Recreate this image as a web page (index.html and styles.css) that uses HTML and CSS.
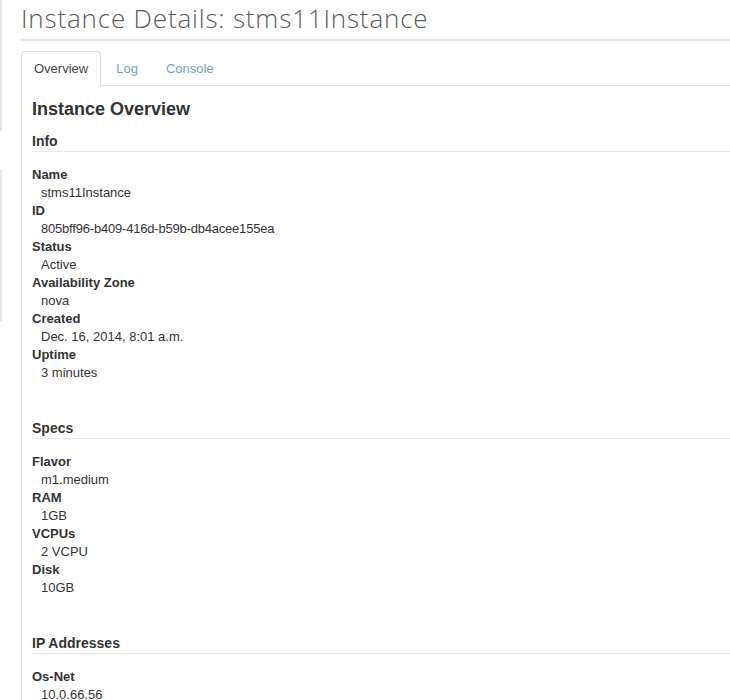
FILE: index.html
```html
<!DOCTYPE html>
<html>
<head>
<meta charset="utf-8">
<link rel="stylesheet" href="styles.css">
</head>
<body>
<div class="page">
  <div class="sidebar">
    <div class="strip strip-a"></div>
    <div class="strip strip-b"></div>
  </div>
  <div class="main">
    <h1 class="page-title">Instance Details: stms11Instance</h1>
    <ul class="tabs">
      <li class="tab active"><a>Overview</a></li>
      <li class="tab"><a>Log</a></li>
      <li class="tab"><a>Console</a></li>
    </ul>
    <div class="panel">
      <h3 class="overview-title">Instance Overview</h3>

      <h4 class="section-title">Info</h4>
      <dl class="details">
        <dt>Name</dt><dd>stms11Instance</dd>
        <dt>ID</dt><dd class="tight">805bff96-b409-416d-b59b-db4acee155ea</dd>
        <dt>Status</dt><dd>Active</dd>
        <dt>Availability Zone</dt><dd>nova</dd>
        <dt>Created</dt><dd>Dec. 16, 2014, 8:01 a.m.</dd>
        <dt>Uptime</dt><dd>3 minutes</dd>
      </dl>

      <h4 class="section-title">Specs</h4>
      <dl class="details">
        <dt>Flavor</dt><dd>m1.medium</dd>
        <dt>RAM</dt><dd>1GB</dd>
        <dt>VCPUs</dt><dd>2 VCPU</dd>
        <dt>Disk</dt><dd>10GB</dd>
      </dl>

      <h4 class="section-title">IP Addresses</h4>
      <dl class="details">
        <dt>Os-Net</dt><dd>10.0.66.56</dd>
      </dl>
    </div>
  </div>
</div>
</body>
</html>
```
FILE: styles.css
```css
html, body {
  margin: 0;
  padding: 0;
  background: #fff;
  overflow: hidden;
}
body {
  font-family: "Liberation Sans", Arial, sans-serif;
  font-size: 13px;
  color: #333;
}
.page {
  display: flex;
  align-items: flex-start;
  min-height: 700px;
}
.sidebar {
  width: 2px;
  flex: 0 0 2px;
  display: flex;
  flex-direction: column;
}
.strip {
  background: #e7e7e7;
}
.strip-a {
  height: 131px;
}
.strip-b {
  margin-top: 38px;
  height: 152px;
}
.main {
  flex: 1;
  margin-left: 19px;
  min-width: 0;
}
.page-title {
  margin: 0;
  font-family: "Open Sans", sans-serif;
  font-weight: 300;
  font-size: 26px;
  letter-spacing: 0.82px;
  line-height: 36px;
  color: #5c5c5c;
  padding-bottom: 3px;
  border-bottom: 2px solid #e5e5e5;
  white-space: nowrap;
}
.tabs {
  list-style: none;
  margin: 10px 0 0 0;
  padding: 0;
  display: flex;
  border-bottom: 1px solid #ddd;
}
.tab {
  margin-right: 2px;
  margin-bottom: -1px;
}
.tab a {
  display: block;
  padding: 10px 12px 9px 12px;
  line-height: 14px;
  border: 1px solid transparent;
  border-radius: 4px 4px 0 0;
  color: #7b9fb3;
}
.tab.active a {
  color: #444;
  background: #fff;
  border-color: #ddd #ddd transparent #ddd;
}
.panel {
  border-left: 1px solid #ddd;
  padding: 12px 0 40px 10px;
}
.overview-title {
  margin: 0;
  font-size: 18px;
  line-height: 22px;
  font-weight: bold;
  color: #333;
}
.section-title {
  margin: 36px 0 0 0;
  font-size: 14px;
  line-height: 20px;
  font-weight: bold;
  color: #333;
  border-bottom: 1px solid #e8e8e8;
}
.overview-title + .section-title {
  margin-top: 11px;
}
.details {
  margin: 14px 0 0 0;
}
.details dt {
  font-weight: bold;
  line-height: 18px;
  color: #333;
}
.details dd {
  margin-left: 9px;
  line-height: 18px;
  color: #333;
}
.details dd.tight {
  letter-spacing: -0.2px;
}
```
